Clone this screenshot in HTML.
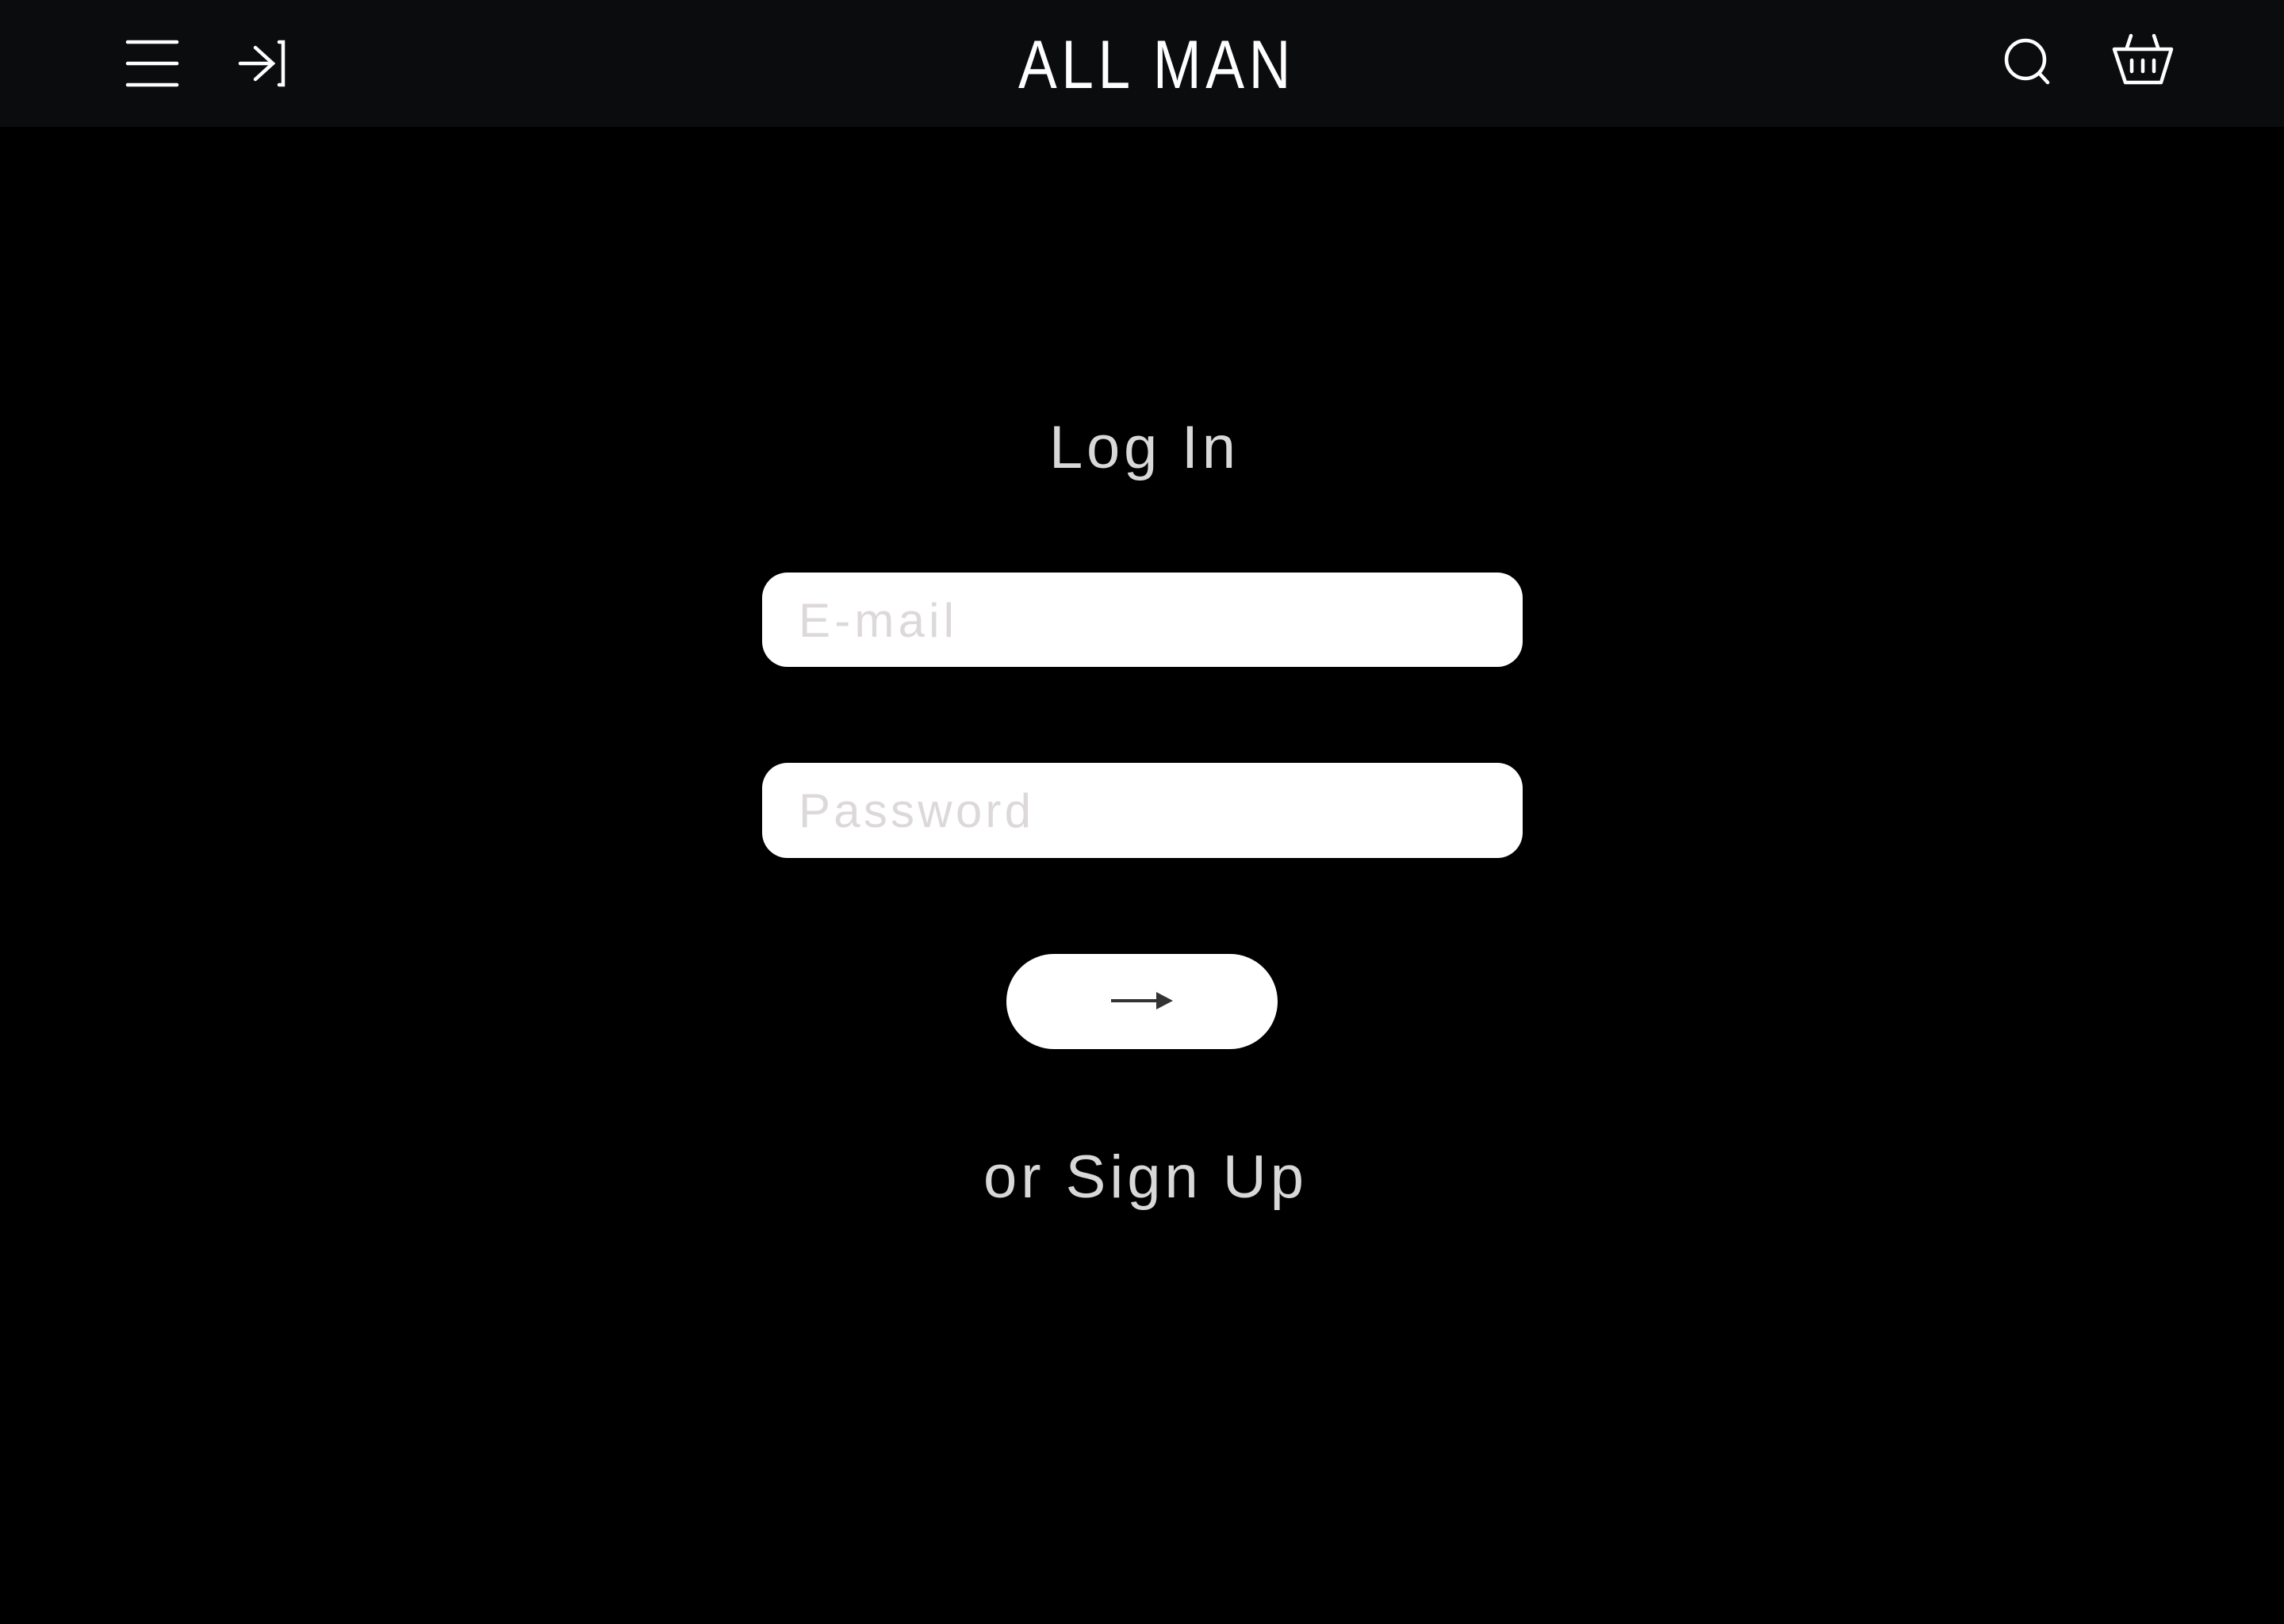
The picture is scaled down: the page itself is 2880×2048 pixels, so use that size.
<!DOCTYPE html>
<html><head><meta charset="utf-8"><style>
html,body{margin:0;padding:0;background:#000;width:2880px;height:2048px;overflow:hidden}
svg{display:block}
text{font-family:"Liberation Sans",sans-serif}
</style></head><body>
<svg width="2880" height="2048" viewBox="0 0 2880 2048" xmlns="http://www.w3.org/2000/svg">
<rect width="2880" height="2048" fill="#000"/>
<rect width="2880" height="160" fill="#0b0c0e"/>
<g stroke="#fff" stroke-width="4.5" stroke-linecap="round" fill="none">
<line x1="161" y1="53" x2="223" y2="53"/>
<line x1="161" y1="80" x2="223" y2="80"/>
<line x1="161" y1="107" x2="223" y2="107"/>
<line x1="303" y1="80" x2="343" y2="80"/>
<polyline points="322,60 344,80 322,100"/>
<polyline points="352,53 357,53 357,107 352,107"/>
<circle cx="2554" cy="75" r="24"/>
<line x1="2571" y1="92" x2="2582" y2="104"/>
<polygon points="2666,62 2738,62 2725,104 2680,104" stroke-linejoin="round"/>
<line x1="2687" y1="45" x2="2682" y2="60"/>
<line x1="2716" y1="45" x2="2721" y2="60"/>
<line x1="2688" y1="76" x2="2688" y2="90"/>
<line x1="2702" y1="76" x2="2702" y2="90"/>
<line x1="2716" y1="76" x2="2716" y2="90"/>
</g>
<text x="1284" y="111" font-size="86" fill="#fff" textLength="404" lengthAdjust="spacing" transform="translate(1284 0) scale(0.85 1) translate(-1284 0)">ALL MAN</text>
<text x="1323" y="590" font-size="76" fill="#d8d8d8" textLength="235" lengthAdjust="spacing">Log In</text>
<rect x="961" y="722" width="959" height="119" rx="32" fill="#fff"/>
<rect x="961" y="962" width="959" height="120" rx="32" fill="#fff"/>
<text x="1007" y="803" font-size="60" fill="#ddd9db" textLength="196" lengthAdjust="spacing">E-mail</text>
<text x="1007" y="1043" font-size="60" fill="#ddd9db" textLength="293" lengthAdjust="spacing">Password</text>
<rect x="1269" y="1203" width="342" height="120" rx="60" fill="#fff"/>
<line x1="1401" y1="1262" x2="1462" y2="1262" stroke="#333" stroke-width="4"/>
<polygon points="1458,1251 1479,1262 1458,1273" fill="#333"/>
<text x="1240" y="1510" font-size="76" fill="#d8d8d8" textLength="404" lengthAdjust="spacing">or Sign Up</text>
</svg>
</body></html>
